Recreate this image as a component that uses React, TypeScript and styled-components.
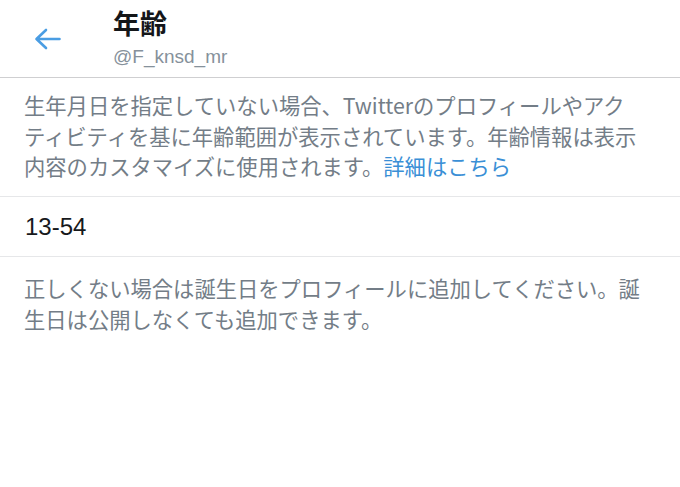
import React from "react";
import styled, { createGlobalStyle } from "styled-components";

const GlobalStyle = createGlobalStyle`
  html, body {
    margin: 0;
    padding: 0;
    background: #ffffff;
  }
  body {
    font-family: "Noto Sans CJK JP", "Noto Sans", sans-serif;
    -webkit-font-smoothing: antialiased;
  }
`;

const Page = styled.div`
  width: 680px;
  min-height: 487px;
  background: #ffffff;
`;

const Header = styled.header`
  height: 78px;
  display: flex;
  align-items: flex-start;
  border-bottom: 1.5px solid #cfcfd1;
  box-sizing: border-box;
`;

const BackButton = styled.div`
  width: 113px;
  height: 78px;
  padding-left: 34px;
  box-sizing: border-box;
  display: flex;
  align-items: center;
  color: #4a9de3;
`;

const TitleBlock = styled.div`
  display: flex;
  flex-direction: column;
  padding-top: 7px;
`;

const Title = styled.h1`
  margin: 0;
  font-size: 27px;
  line-height: 32px;
  font-weight: 700;
  color: #141619;
`;

const Handle = styled.div`
  margin-top: 5px;
  font-family: "Liberation Sans", Arial, sans-serif;
  font-size: 19px;
  line-height: 26px;
  color: #86919b;
`;

const Section = styled.section<{ $top: number; $bottom: number }>`
  padding: ${(p) => p.$top}px 24px ${(p) => p.$bottom}px 24px;
`;

const Note = styled.p`
  margin: 0;
  font-size: 21.3px;
  line-height: 30.6px;
  font-weight: 400;
  color: #737d87;
  white-space: nowrap;
`;

const Link = styled.span`
  color: #3a8fd6;
`;

const Divider = styled.div`
  height: 1.5px;
  background: #e6e7e9;
`;

const ValueRow = styled.div`
  height: 58.5px;
  padding: 0 25px;
  display: flex;
  align-items: center;
  font-family: "Liberation Sans", Arial, sans-serif;
  font-size: 24px;
  color: #17191c;
`;

const BackArrow = () => (
  <svg width="27" height="22" viewBox="0 0 27 22" fill="none">
    <path
      d="M25.5 11H3M12 2L2.5 11l9.5 9"
      stroke="currentColor"
      strokeWidth="2.6"
      strokeLinecap="round"
      strokeLinejoin="round"
    />
  </svg>
);

export default function App() {
  return (
    <Page>
      <GlobalStyle />
      <Header>
        <BackButton>
          <BackArrow />
        </BackButton>
        <TitleBlock>
          <Title>年齢</Title>
          <Handle>@F_knsd_mr</Handle>
        </TitleBlock>
      </Header>
      <Section $top={12} $bottom={14}>
        <Note>
          生年月日を指定していない場合、Twitterのプロフィールやアク
          <br />
          ティビティを基に年齢範囲が表示されています。年齢情報は表示
          <br />
          内容のカスタマイズに使用されます。<Link>詳細はこちら</Link>
        </Note>
      </Section>
      <Divider />
      <ValueRow>13-54</ValueRow>
      <Divider />
      <Section $top={16} $bottom={16}>
        <Note>
          正しくない場合は誕生日をプロフィールに追加してください。誕
          <br />
          生日は公開しなくても追加できます。
        </Note>
      </Section>
    </Page>
  );
}
